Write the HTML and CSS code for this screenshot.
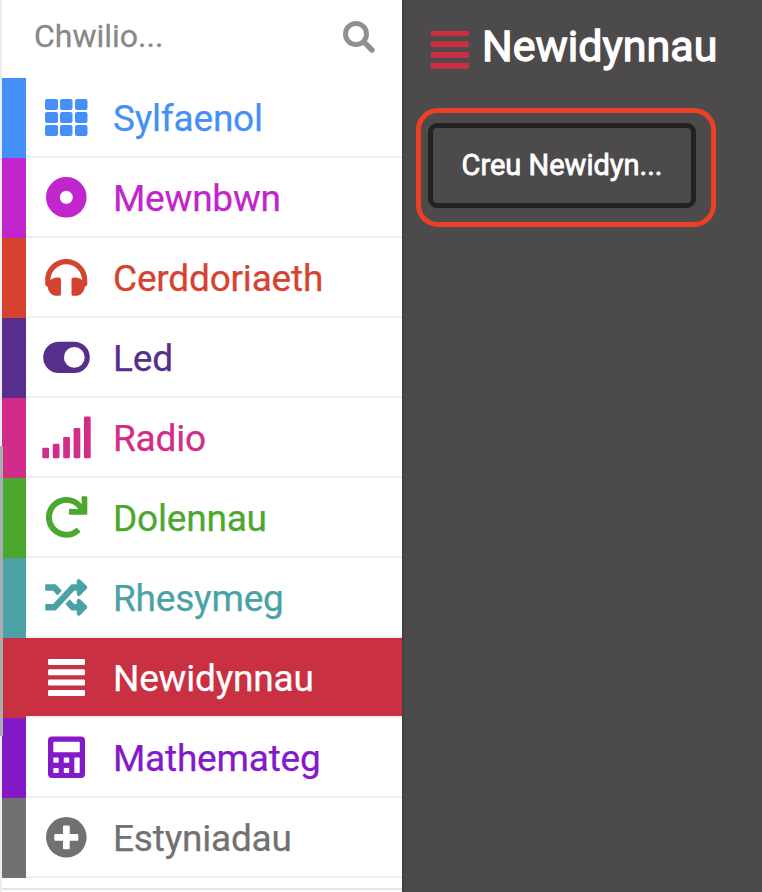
FILE: index.html
```html
<!DOCTYPE html>
<html lang="cy">
<head>
<meta charset="utf-8">
<title>Newidynnau</title>
<link rel="stylesheet" href="styles.css">
</head>
<body>
<div class="editor">
  <aside class="toolbox">
    <div class="search">
      <span class="search-label">Chwilio...</span>
      <svg class="search-icon" viewBox="0 0 34 34"><circle cx="14" cy="14" r="10.5" fill="none" stroke="currentColor" stroke-width="5"/><path d="M22.5 22.5L30 30" stroke="currentColor" stroke-width="5.4" stroke-linecap="round"/></svg>
    </div>
    <ul class="categories">
      <li class="category basic"><div class="row">
        <svg class="icon" viewBox="0 0 52 78"><path d="M6 21h9a2 2 0 0 1 2 2v7a2 2 0 0 1-2 2H6a2 2 0 0 1-2-2v-7a2 2 0 0 1 2-2zm15 0h8.500a2 2 0 0 1 2 2v7a2 2 0 0 1-2 2H21a2 2 0 0 1-2-2v-7a2 2 0 0 1 2-2zm15 0h8.500a2 2 0 0 1 2 2v7a2 2 0 0 1-2 2H36a2 2 0 0 1-2-2v-7a2 2 0 0 1 2-2zM6 34h9a2 2 0 0 1 2 2v7a2 2 0 0 1-2 2H6a2 2 0 0 1-2-2v-7a2 2 0 0 1 2-2zm15 0h8.500a2 2 0 0 1 2 2v7a2 2 0 0 1-2 2H21a2 2 0 0 1-2-2v-7a2 2 0 0 1 2-2zm15 0h8.500a2 2 0 0 1 2 2v7a2 2 0 0 1-2 2H36a2 2 0 0 1-2-2v-7a2 2 0 0 1 2-2zM6 47h9a2 2 0 0 1 2 2v7a2 2 0 0 1-2 2H6a2 2 0 0 1-2-2v-7a2 2 0 0 1 2-2zm15 0h8.500a2 2 0 0 1 2 2v7a2 2 0 0 1-2 2H21a2 2 0 0 1-2-2v-7a2 2 0 0 1 2-2zm15 0h8.500a2 2 0 0 1 2 2v7a2 2 0 0 1-2 2H36a2 2 0 0 1-2-2v-7a2 2 0 0 1 2-2z"/></svg>
        <span class="label">Sylfaenol</span></div></li>
      <li class="category input"><div class="row">
        <svg class="icon" viewBox="0 0 52 78"><circle cx="25.300" cy="39.300" r="13.400" fill="none" stroke="currentColor" stroke-width="13.800"/></svg>
        <span class="label">Mewnbwn</span></div></li>
      <li class="category music"><div class="row">
        <svg class="icon" viewBox="0 0 52 78"><path transform="translate(4.200 18.400) scale(.0822)" d="M256 32C114.520 32 0 146.497 0 288v48a32 32 0 0 0 17.689 28.622l14.383 7.191C34.083 431.903 83.421 480 144 480h24c13.255 0 24-10.745 24-24V280c0-13.255-10.745-24-24-24h-24c-31.342 0-59.671 12.879-80 33.627V288c0-105.869 86.131-192 192-192s192 86.131 192 192v1.627C427.671 268.879 399.342 256 368 256h-24c-13.255 0-24 10.745-24 24v176c0 13.255 10.745 24 24 24h24c60.579 0 109.928-48.098 111.928-108.187l14.382-7.191A32 32 0 0 0 512 336v-48c0-141.479-114.496-256-256-256z"/></svg>
        <span class="label">Cerddoriaeth</span></div></li>
      <li class="category led"><div class="row">
        <svg class="icon" viewBox="0 0 52 78"><path fill-rule="evenodd" d="M17.800 23.800h15.400a15.600 15.600 0 0 1 0 31.200H17.800a15.600 15.600 0 0 1 0-31.200zM33.300 29a10.400 10.400 0 1 0 0 20.800a10.400 10.400 0 0 0 0-20.800z"/></svg>
        <span class="label">Led</span></div></li>
      <li class="category radio"><div class="row">
        <svg class="icon" viewBox="0 0 52 78"><rect x="1.300" y="49.700" width="6.700" height="10.500" rx="1.200"/><rect x="11.800" y="45.700" width="6.700" height="14.500" rx="1.200"/><rect x="22.200" y="39" width="6.700" height="21.200" rx="1.200"/><rect x="32.600" y="30" width="6.700" height="30.200" rx="1.200"/><rect x="43" y="18.500" width="6.700" height="41.700" rx="1.200"/></svg>
        <span class="label">Radio</span></div></li>
      <li class="category loops"><div class="row">
        <svg class="icon" viewBox="0 0 52 78"><path transform="translate(4.300 18.300) scale(.082)" d="M500.330 0h-47.410a12 12 0 0 0-12 12.570l4 82.760A247.420 247.420 0 0 0 256 8C119.340 8 7.900 119.530 8 256.190 8.100 393.070 119.100 504 256 504a247.100 247.100 0 0 0 166.180-63.910 12 12 0 0 0 .48-17.430l-34-34a12 12 0 0 0-16.380-.55A176 176 0 1 1 402.100 157.800l-101.530-4.870a12 12 0 0 0-12.570 12v47.410a12 12 0 0 0 12 12h200.330a12 12 0 0 0 12-12V12a12 12 0 0 0-12-12z"/></svg>
        <span class="label">Dolennau</span></div></li>
      <li class="category logic"><div class="row">
        <svg class="icon" viewBox="0 0 52 78"><path transform="translate(4.200 18.300) scale(.0822)" d="M504.971 359.029c9.373 9.373 9.373 24.569 0 33.941l-80 79.984c-15.010 15.010-40.971 4.490-40.971-16.971V416h-58.785a12.004 12.004 0 0 1-8.773-3.812l-70.556-75.596 53.333-57.143L352 336h32v-39.981c0-21.438 25.943-31.998 40.971-16.971l80 79.981zM12 176h84l52.781 56.551 53.333-57.143-70.556-75.596A11.999 11.999 0 0 0 122.785 96H12c-6.627 0-12 5.373-12 12v56c0 6.627 5.373 12 12 12zm372 0v39.984c0 21.460 25.961 31.980 40.971 16.971l80-79.984c9.373-9.373 9.373-24.569 0-33.941l-80-79.981C409.943 24.021 384 34.582 384 56.019V96h-58.785a12.004 12.004 0 0 0-8.773 3.812L96 336H12c-6.627 0-12 5.373-12 12v56c0 6.627 5.373 12 12 12h110.785c3.326 0 6.503-1.381 8.773-3.812L352 176h32z"/></svg>
        <span class="label">Rhesymeg</span></div></li>
      <li class="category variables selected"><div class="row">
        <svg class="icon" viewBox="0 0 52 78"><rect x="7" y="21" width="37" height="6" rx="1.300"/><rect x="7" y="31.200" width="37" height="6" rx="1.300"/><rect x="7" y="41.600" width="37" height="6" rx="1.300"/><rect x="7" y="52" width="37" height="6" rx="1.300"/></svg>
        <span class="label">Newidynnau</span></div></li>
      <li class="category math"><div class="row">
        <svg class="icon" viewBox="0 0 52 78"><path fill-rule="evenodd" d="M11 18.400h29a4 4 0 0 1 4 4V56a4 4 0 0 1-4 4H11a4 4 0 0 1-4-4V22.400a4 4 0 0 1 4-4zM13.300 23.700a1 1 0 0 0-1 1v8.500a1 1 0 0 0 1 1h24.500a1 1 0 0 0 1-1v-8.500a1 1 0 0 0-1-1zM13 39.400h4a.7.7 0 0 1 .7.7v4a.7.7 0 0 1-.7.7h-4a.7.7 0 0 1-.7-.7v-4a.7.7 0 0 1 .7-.7zm10.500 0h4a.7.7 0 0 1 .7.7v4a.7.7 0 0 1-.7.7h-4a.7.7 0 0 1-.7-.7v-4a.7.7 0 0 1 .7-.7zm10.500 0h4a.7.7 0 0 1 .7.700v14.200a.7.7 0 0 1-.7.7h-4a.7.7 0 0 1-.7-.7V40.100a.7.7 0 0 1 .7-.7zM13 50h4a.7.7 0 0 1 .7.7v3.600a.7.7 0 0 1-.7.7h-4a.7.7 0 0 1-.7-.7v-3.600a.7.7 0 0 1 .7-.7zm10.500 0h4a.7.7 0 0 1 .7.700v3.600a.7.7 0 0 1-.7.7h-4a.7.7 0 0 1-.7-.7v-3.600a.7.7 0 0 1 .7-.7z"/></svg>
        <span class="label">Mathemateg</span></div></li>
      <li class="category extensions"><div class="row">
        <svg class="icon" viewBox="0 0 52 78"><circle cx="25.300" cy="39.300" r="20.300"/><path class="cutout" d="M23 27.500h4.700a1 1 0 0 1 1 1V36h7.600a1 1 0 0 1 1 1v4.700a1 1 0 0 1-1 1h-7.600v7.600a1 1 0 0 1-1 1H23a1 1 0 0 1-1-1v-7.600h-7.700a1 1 0 0 1-1-1V37a1 1 0 0 1 1-1H22v-7.500a1 1 0 0 1 1-1z"/></svg>
        <span class="label">Estyniadau</span></div></li>
    </ul>
    <div class="toolbox-end"></div>
    <div class="scroll-thumb"></div>
  </aside>
  <main class="flyout">
    <h1 class="heading">
      <svg class="heading-icon" viewBox="0 0 40 40"><rect x=".8" y=".9" width="38" height="5.400" rx="1"/><rect x=".8" y="11.300" width="38" height="6" rx="1"/><rect x=".8" y="22" width="38" height="6" rx="1"/><rect x=".8" y="32.800" width="38" height="6" rx="1"/></svg>
      <span>Newidynnau</span>
    </h1>
    <div class="highlight"><button class="create">Creu Newidyn...</button></div>
  </main>
</div>
</body>
</html>
```
FILE: styles.css
```css
* { box-sizing: border-box; }
body { margin: 0; font-family: Roboto, sans-serif; background: #fff; overflow: hidden; }
.editor { display: flex; width: 762px; height: 892px; }
.toolbox { position: relative; flex: none; width: 402px; background: #fff; border-left: 2px solid #eee; }
.search { display: flex; justify-content: space-between; height: 78px; padding: 20px 26px 0 32px; color: #888; }
.search-label { font-size: 32px; line-height: 32px; -webkit-text-stroke: .3px; }
.search-icon { width: 34px; height: 34px; color: #909090; }
.categories { list-style: none; margin: 0; padding: 0; }
.category { height: 80px; border-left: 24px solid var(--tone); color: var(--tone); }
.row { display: flex; align-items: center; height: 80px; padding-left: 15px; border-bottom: 2px solid #ecf0f1; }
.icon { flex: none; width: 52px; height: 78px; fill: currentColor; }
.label { margin-left: 20px; padding-top: 3px; font-size: 37px; line-height: 43px; letter-spacing: -.2px; -webkit-text-stroke: .25px; }
.cutout { fill: #fff; }
.basic { --tone: #458ff8; }
.input { --tone: #c026cb; }
.music { --tone: #d54330; }
.led { --tone: #572e8c; }
.radio { --tone: #d12d88; }
.loops { --tone: #4ca72f; }
.logic { --tone: #4aa2a7; }
.variables { --tone: #c93143; }
.math { --tone: #8319c7; }
.extensions { --tone: #717171; }
.selected .row { color: #fff; background: var(--tone); background-clip: padding-box; }
.toolbox-end { height: 12px; border-bottom: 2px solid #e5e5e5; }
.scroll-thumb { position: absolute; left: -2px; top: 446px; width: 3px; height: 290px; background: #a8adaf; }
.flyout { flex: 1; padding: 25px 0 0 14px; background: #4c4a4b; box-shadow: inset 3px 0 3px -2px #3e3c3d; }
.heading { display: flex; margin: 0 0 28px; padding-left: 14px; height: 55px; color: #fff; font-size: 43px; font-weight: 400; line-height: 42px; -webkit-text-stroke: 1.3px; }
.heading-icon { width: 40px; height: 40px; margin: 5px 12px 0 0; fill: #c93143; }
.highlight { width: 300px; height: 119px; padding: 10px 0 0 7px; border: 5px solid #eb4026; border-radius: 22px; }
.create { display: block; width: 268px; height: 85px; padding: 0 0 2px; border: 5px solid #222; border-radius: 9px; background: transparent; color: #fff; font: 400 29px/34px Roboto, sans-serif; -webkit-text-stroke: .8px; }
```
